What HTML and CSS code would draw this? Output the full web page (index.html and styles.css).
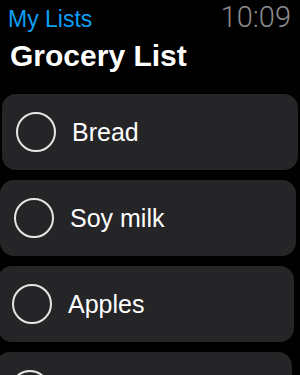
FILE: index.html
```html
<!DOCTYPE html>
<html lang="en">
<head>
    <meta charset="UTF-8">
    <meta name="viewport" content="width=device-width, initial-scale=1.0">
    <title>Grocery List</title>
    <link rel="stylesheet" href="styles.css">
</head>
<body>

<div class="watch-screen">
    <div class="top-bar">
        <a class="back-link" href="#">My Lists</a>
        <div class="clock">10:09</div>
    </div>

    <h1 class="list-title">Grocery List</h1>

    <ul class="items">
        <li class="item">
            <span class="check"></span>
            <span class="item-name">Bread</span>
        </li>
        <li class="item">
            <span class="check"></span>
            <span class="item-name">Soy milk</span>
        </li>
        <li class="item">
            <span class="check"></span>
            <span class="item-name">Apples</span>
        </li>
        <!-- next row is only peeking in below the fold -->
        <li class="item">
            <span class="check"></span>
        </li>
    </ul>
</div>

</body>
</html>
```

FILE: styles.css
```css
body {
    margin: 0;
    background-color: #000; /* Watch screens are pure black */
    font-family: 'Liberation Sans', Arial, sans-serif;
    color: white;
    overflow: hidden;
}

.watch-screen {
    width: 300px;
    height: 375px;
    overflow: hidden;
}

.top-bar {
    display: flex;
    justify-content: space-between;
    align-items: baseline;
    padding: 0 9px 0 8px;
    height: 34px;
}

.back-link {
    font-size: 23px;
    color: #0e9ff5;
    text-decoration: none;
    line-height: 29px;
}

.clock {
    font-family: Roboto, 'Liberation Sans', sans-serif;
    font-weight: 300;
    font-size: 29px;
    color: #8a8a8d;
    line-height: 34px;
}

.list-title {
    font-size: 30px;
    font-weight: bold;
    margin: 5px 0 0 10px;
    line-height: 34px;
}

.items {
    list-style: none;
    margin: 21px 0 0;
    padding: 0;
    display: flex;
    flex-direction: column;
    gap: 10px;
}

.item {
    width: 296px;
    height: 76px;
    box-sizing: border-box;
    background-color: #252527;
    border-radius: 14px;
    display: flex;
    align-items: center;
    gap: 16px;
    padding-left: 14px;
}

/* Rows drift left a little as the list curves away */
.item:nth-child(1) { margin-left: 2px; }
.item:nth-child(2) { margin-left: 0; }
.item:nth-child(3) { margin-left: -2px; }
.item:nth-child(4) { margin-left: -4px; }

.check {
    width: 40px;
    height: 40px;
    box-sizing: border-box;
    border: 2px solid #e6e6e6;
    border-radius: 50%;
    flex-shrink: 0;
}

.item-name {
    font-size: 25px;
}
```
